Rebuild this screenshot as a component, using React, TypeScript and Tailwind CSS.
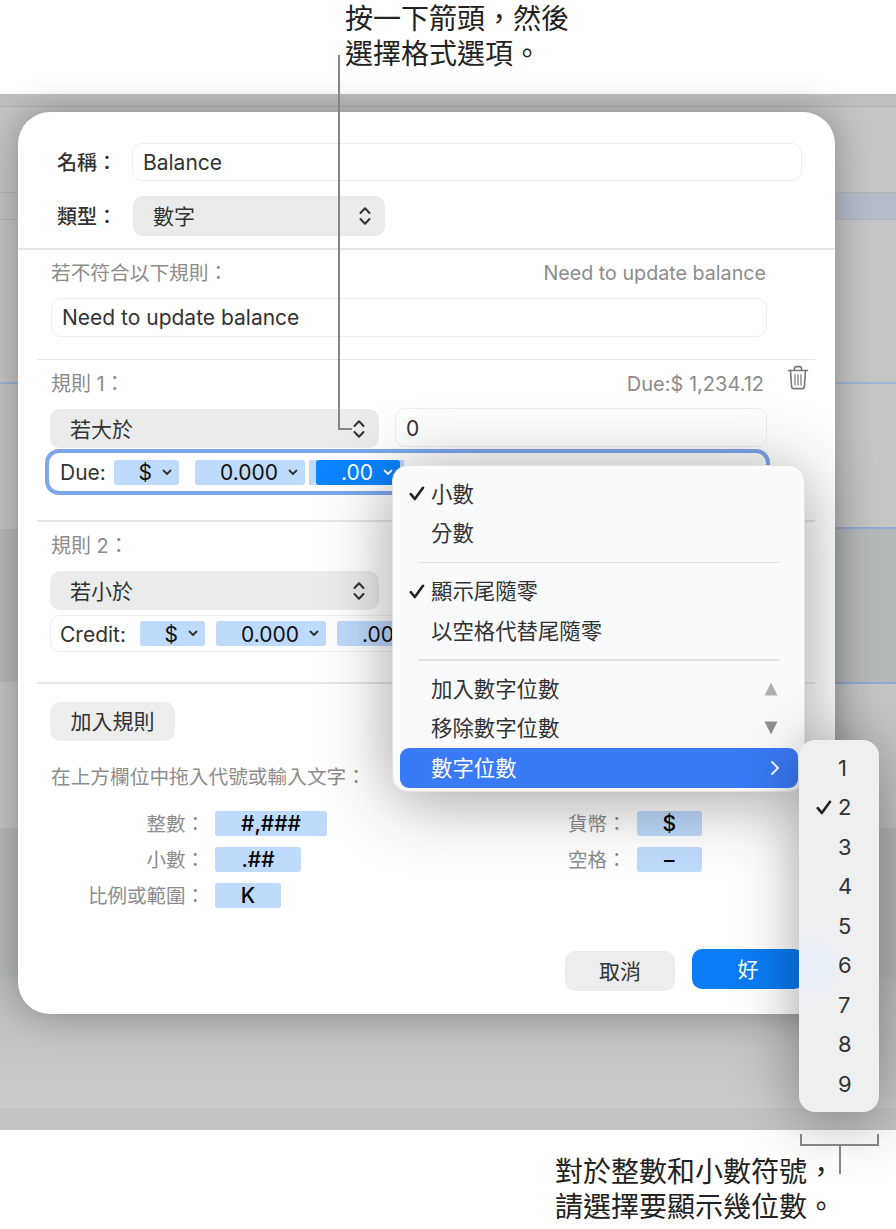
import type { ReactNode } from 'react';

const font = 'font-["Inter","Noto_Sans_CJK_TC",sans-serif]';

function Stepper() {
  return (
    <svg width="14" height="22" viewBox="0 0 14 22" fill="none" stroke="#333" strokeWidth="2" strokeLinecap="round" strokeLinejoin="round">
      <path d="M2.5 8 7 3.2 11.5 8" />
      <path d="M2.5 14 7 18.8 11.5 14" />
    </svg>
  );
}

function Chevron({ color = '#333' }: { color?: string }) {
  return (
    <svg width="10" height="7" viewBox="0 0 10 7" fill="none" stroke={color} strokeWidth="1.8" strokeLinecap="round" strokeLinejoin="round">
      <path d="M1.5 1.5 5 5l3.5-3.5" />
    </svg>
  );
}

function Check() {
  return (
    <svg width="16" height="15" viewBox="0 0 16 15" fill="none" stroke="#222" strokeWidth="2.6" strokeLinecap="round" strokeLinejoin="round">
      <path d="M1.8 8.2 5.8 13 14 1.8" />
    </svg>
  );
}

function Trash() {
  return (
    <svg width="22" height="26" viewBox="0 0 22 26" fill="none" stroke="#777" strokeWidth="1.6" strokeLinecap="round" strokeLinejoin="round">
      <path d="M1.5 5.5h19" />
      <path d="M7.5 5V3.4C7.5 2.3 8.2 1.6 9.3 1.6h3.4c1.1 0 1.8.7 1.8 1.9V5" />
      <path d="M3.5 5.5 4.6 21.6c.1 1.3.9 2 2.1 2h8.6c1.2 0 2-.7 2.1-2L18.500 5.500" />
      <path d="M8 9.500v10.500M11 9.500v10.500M14 9.500v10.500" strokeWidth="1.200" />
    </svg>
  );
}

function Select({ label, width, className = '' }: { label: string; width: string; className?: string }) {
  return (
    <div className={`flex h-[39px] items-center justify-between rounded-[10px] bg-[#ebebeb] pl-[20px] pr-[13px] text-[21px] text-[#333] ${width} ${className}`}>
      <span className="translate-y-[1px]">{label}</span>
      <Stepper />
    </div>
  );
}

function Token({ label, width }: { label: string; width: string }) {
  return (
    <div className={`flex h-[25px] items-center justify-end gap-[10px] rounded-[3px] bg-[#bedafd] pr-[7px] text-[21px] text-[#111] ${width}`}>
      <span className="translate-y-[1px]">{label}</span>
      <Chevron />
    </div>
  );
}

function Divider({ className }: { className: string }) {
  return <div className={`h-[1.5px] bg-[#e6e6e6] ${className}`} />;
}

function FormatRow({ label, token, width }: { label: string; token: string; width: string }) {
  return (
    <div className="flex h-[25px] items-center">
      <span className="flex-1 translate-y-[1px] whitespace-nowrap text-right text-[19.500px] text-[#8c8c8c]">{label}</span>
      <span className={`ml-[10px] flex h-[25px] items-center justify-center rounded-[3px] bg-[#bedafd] text-[21px] font-medium text-black ${width}`}>{token}</span>
    </div>
  );
}

function MenuRow({ children, checked, right, active }: { children: ReactNode; checked?: boolean; right?: ReactNode; active?: boolean }) {
  return (
    <div className={`flex h-[39.500px] items-center text-[21.400px] ${active ? 'ml-[7px] w-[398px] rounded-[9px] bg-[#397bf6] pl-[31px] pr-[18px] text-white' : 'pl-[16px] pr-[26px] text-[#333]'}`}>
      {!active && <span className="flex w-[22px] justify-start">{checked && <Check />}</span>}
      <span className="flex-1">{children}</span>
      {right}
    </div>
  );
}

function Triangle({ down }: { down?: boolean }) {
  return (
    <svg width="14" height="14" viewBox="0 0 14 14" fill={down ? '#8f8f8f' : '#b0b0b0'}>
      <path d={down ? 'M0.500 0.500h13L7 13.500z' : 'M7 0.500l6.500 13h-13z'} />
    </svg>
  );
}

export default function App() {
  const digits = [1, 2, 3, 4, 5, 6, 7, 8, 9];

  return (
    <div className={`relative h-[1229px] w-[896px] overflow-hidden bg-white ${font}`}>
      {/* top callout */}
      <div className="h-[94px] pl-[345px] pt-[1.500px] text-[28px] leading-[35px] text-[#222]">
        <div>按一下箭頭，然後</div>
        <div>選擇格式選項。</div>
      </div>

      {/* blurred spreadsheet behind the sheet */}
      <div className="flex h-[1036px] flex-col bg-[#c5c5c5]">
        <div className="h-[12px] bg-[#bfbfbf]" />
        <div className="h-[86px] border-t border-[#b0b0b0]" />
        <div className="h-[28px] border-y border-[#b3b3b3] bg-gradient-to-r from-[#c4c4c4] from-[10%] to-[#b4bcca] to-[10%]" />
        <div className="h-[164px] border-b-2 border-[#9db4d4]" />
        <div className="h-[143px]" />
        <div className="h-[2px] bg-gradient-to-r from-[#c4c4c4] from-[10%] to-[#8fabd4] to-[10%]" />
        <div className="h-[153px] bg-[#b6b9b9]" />
        <div className="h-[2px] bg-gradient-to-r from-[#c4c4c4] from-[10%] to-[#8fabd4] to-[10%]" />
        <div className="h-[144px]" />
        <div className="h-[149px] bg-[#b6b9b9]" />
        <div className="h-[131px] bg-gradient-to-b from-[#bdbdbd] to-[#cbcbcb]" />
        <div className="flex-1 bg-[#c4c4c4]" />
      </div>

      {/* bottom callout */}
      <div className="pl-[555px] pt-[24.500px] text-[28px] leading-[35px] text-[#222]">
        <div>對於整數和小數符號，</div>
        <div>請選擇要顯示幾位數。</div>
      </div>

      {/* sheet */}
      <div className="absolute left-[18px] top-[112px] h-[902px] w-[817px] overflow-hidden rounded-[32px] bg-white pt-[31px] shadow-[0_0_36px_rgba(0,0,0,0.32)]">
        <div className="flex h-[38px] items-center pl-[39px] pr-[33px]">
          <span className="w-[75px] translate-y-[1px] text-[20px] font-medium text-[#333]">名稱：</span>
          <div className="flex h-[38px] flex-1 items-center rounded-[10px] border border-[#eeeeee] pl-[10px] pt-[2px] text-[21px] text-[#333]">Balance</div>
        </div>
        <div className="mt-[15px] flex h-[40px] items-center pl-[39px]">
          <span className="w-[76px] translate-y-[1px] text-[20px] font-medium text-[#333]">類型：</span>
          <Select label="數字" width="w-[252px]" className="h-[40px]" />
        </div>
        <Divider className="mt-[12px]" />

        <div className="pl-[33px]">
          <div className="mt-[12px] flex h-[24px] w-[715px] items-center justify-between pt-[1px] text-[19.700px] text-[#8c8c8c]">
            <span>若不符合以下規則：</span>
            <span>Need to update balance</span>
          </div>
          <div className="mt-[12px] flex h-[39px] w-[716px] items-center rounded-[10px] border border-[#eeeeee] pl-[10px] pt-[2px] text-[21px] text-[#333]">Need to update balance</div>
        </div>
        <Divider className="ml-[19px] mr-[20px] mt-[22px]" />

        <div className="pl-[33px]">
          <div className="mt-[11px] flex h-[24px] w-[757px] items-center pt-[2px] text-[20px] text-[#8c8c8c]">
            <span className="flex-1">規則 1：</span>
            <span>Due:$ 1,234.12</span>
            <span className="ml-[22px] translate-x-[1px] -translate-y-[6px]"><Trash /></span>
          </div>
          <div className="mt-[13px] flex h-[40px] items-start gap-[16px]">
            <Select label="若大於" width="w-[329px]" className="-ml-[1px] mt-[1px]" />
            <div className="flex h-[39px] w-[372px] items-center rounded-[10px] border border-[#eeeeee] pl-[10px] pt-[2px] text-[21px] text-[#333]">0</div>
          </div>
          <div className="-ml-[6px] mt-[1px] flex h-[46px] w-[725px] items-center rounded-[14px] border-[4px] border-[#7ea7ea] bg-white pl-[11px]">
            <span className="w-[54px] translate-y-[1px] text-[21px] text-[#333]">Due:</span>
            <Token label="$" width="w-[65px]" />
            <div className="ml-[16px]"><Token label="0.000" width="w-[110px]" /></div>
            <div className="ml-[4px] flex h-[25px] w-[95px] items-center bg-[#bedafd] pl-[7px]">
              <div className="flex h-[25px] w-[84px] items-center justify-end gap-[10px] rounded-[3px] bg-[#0a84ff] pr-[7px] text-[21px] text-white">
                <span className="translate-y-[1px]">.00</span>
                <Chevron color="#ffffff" />
              </div>
            </div>
          </div>
        </div>
        <Divider className="ml-[19px] mr-[20px] mt-[25px]" />

        <div className="pl-[33px]">
          <div className="mt-[12px] flex h-[24px] items-center text-[20px] text-[#8c8c8c]">規則 2：</div>
          <div className="mt-[13.500px] flex h-[39px] items-start gap-[16px]">
            <Select label="若小於" width="w-[329px]" className="-ml-[1px]" />
          </div>
          <div className="-ml-[1px] mt-[5px] flex h-[37px] w-[720px] items-center rounded-[10px] border border-[#eeeeee] pl-[9px]">
            <span className="w-[80px] translate-y-[1px] text-[21px] text-[#333]">Credit:</span>
            <Token label="$" width="w-[65px]" />
            <div className="ml-[11px]"><Token label="0.000" width="w-[110px]" /></div>
            <div className="ml-[11px]"><Token label=".00" width="w-[84px]" /></div>
          </div>
        </div>
        <Divider className="ml-[19px] mr-[20px] mt-[30px]" />

        <div className="pl-[33px]">
          <div className="-ml-[1px] mt-[18.500px] flex h-[39px] w-[125px] items-center justify-center rounded-[10px] bg-[#ededed] text-[21px] text-[#333]">加入規則</div>
          <div className="mt-[23px] flex h-[24px] items-center pt-[3px] text-[19.700px] text-[#8c8c8c]">在上方欄位中拖入代號或輸入文字：</div>
          <div className="mt-[23px] flex">
            <div className="flex w-[517px] flex-col gap-[11px]">
              <div className="w-[276px]"><FormatRow label="整數：" token="#,###" width="w-[112px]" /></div>
              <div className="w-[250px]"><FormatRow label="小數：" token=".##" width="w-[86px]" /></div>
              <div className="w-[230px]"><FormatRow label="比例或範圍：" token="K" width="w-[66px]" /></div>
            </div>
            <div className="flex w-[134px] flex-col gap-[11px]">
              <FormatRow label="貨幣：" token="$" width="w-[66px]" />
              <FormatRow label="空格：" token="–" width="w-[66px]" />
            </div>
          </div>
        </div>

        <div className="mt-[41px] flex items-start pl-[547px]">
          <div className="mt-[2px] flex h-[40px] w-[110px] items-center justify-center rounded-[10px] bg-[#ededed] pt-[1px] text-[21px] text-[#333]">取消</div>
          <div className="ml-[17px] flex h-[40px] w-[112px] items-center justify-center rounded-[10px] bg-[#0a7cf5] pt-[1px] text-[21px] text-white">好</div>
        </div>
      </div>

      {/* format menu */}
      <div className="absolute left-[392px] top-[465px] h-[327px] w-[413px] rounded-[16px] border border-[#e2e2e2] bg-[#f9fafc] pt-[8px] shadow-[0_8px_70px_rgba(0,0,0,0.38)]">
        <MenuRow checked>小數</MenuRow>
        <MenuRow>分數</MenuRow>
        <div className="flex h-[18.500px] items-center pl-[25px] pr-[24px]"><div className="h-[1.500px] w-full bg-[#e2e2e2]" /></div>
        <MenuRow checked>顯示尾隨零</MenuRow>
        <MenuRow>以空格代替尾隨零</MenuRow>
        <div className="flex h-[18.500px] items-center pl-[25px] pr-[24px]"><div className="h-[1.500px] w-full bg-[#e2e2e2]" /></div>
        <MenuRow right={<Triangle />}>加入數字位數</MenuRow>
        <MenuRow right={<Triangle down />}>移除數字位數</MenuRow>
        <MenuRow active right={
          <svg width="10" height="16" viewBox="0 0 10 16" fill="none" stroke="#ffffff" strokeWidth="2" strokeLinecap="round" strokeLinejoin="round">
            <path d="M2 2l6 6-6 6" />
          </svg>
        }>數字位數</MenuRow>
      </div>

      {/* digits submenu */}
      <div className="absolute left-[799px] top-[740px] h-[372px] w-[80px] rounded-[16px] bg-[#efefef] bg-[radial-gradient(circle_at_12px_226px,#e6effb,#efefef_45px)] pt-[8.500px] shadow-[0_8px_60px_rgba(0,0,0,0.38)]">
        {digits.map((d) => (
          <div key={d} className="flex h-[39.500px] items-center pl-[17px] text-[22px] text-[#333]">
            <span className="flex w-[22px]">{d === 2 && <Check />}</span>
            <span>{d}</span>
          </div>
        ))}
      </div>

      {/* callout lines */}
      <div className="absolute left-[338px] top-[55px] h-[375px] w-[14px] border-b-2 border-l-2 border-[#858585]" />
      <div className="absolute left-[800px] top-[1134px] h-[12px] w-[79px] border-x-2 border-b-2 border-[#858585]">
        <div className="absolute left-[37px] top-[10px] h-[30px] w-[2px] bg-[#858585]" />
      </div>
    </div>
  );
}
